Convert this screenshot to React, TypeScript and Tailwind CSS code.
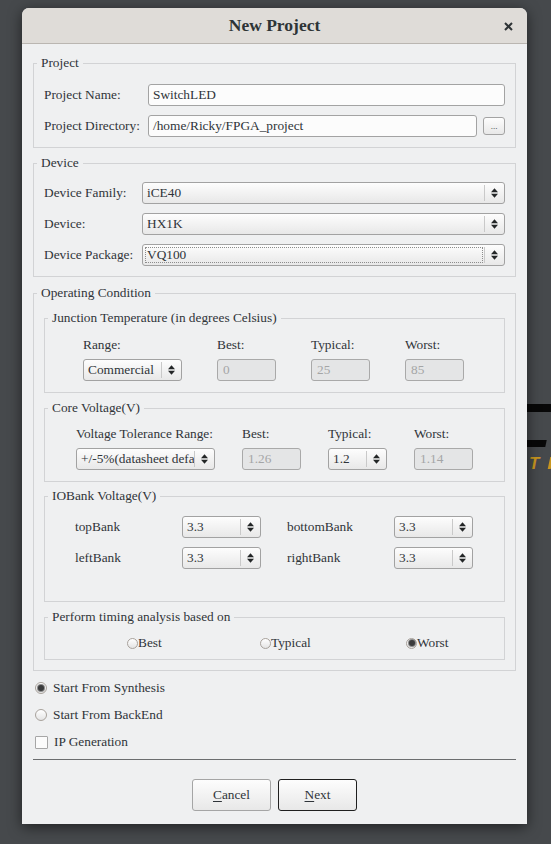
import React from 'react';

function Arrows() {
  return (
    <svg width="7" height="10" viewBox="0 0 7 10">
      <path d="M0 4.2L3.5 0.2L7 4.2Z M0 5.8L3.5 9.8L7 5.8Z" fill="#232627" />
    </svg>
  );
}

function Select({ value, className = '', focused = false }: { value: string; className?: string; focused?: boolean }) {
  return (
    <div
      className={`relative flex h-[22px] items-center rounded-[3px] border border-[#a2a2a2] bg-linear-to-b from-[#fdfdfd] to-[#e8e8e8] ${className}`}
    >
      <span className="flex-1 overflow-hidden whitespace-nowrap pl-[4px] leading-[16px]">{value}</span>
      <span className="flex h-[16px] w-[20px] shrink-0 items-center justify-center border-l border-[#c9c9c9]">
        <Arrows />
      </span>
      {focused && (
        <span className="absolute top-[2px] bottom-[2px] left-[2px] right-[21px] border border-dotted border-[#8c8c8c]" />
      )}
    </div>
  );
}

function Input({ value, className = '' }: { value: string; className?: string }) {
  return (
    <div className={`flex h-[22px] items-center rounded-[3px] border border-[#a3a3a3] bg-[#fcfcfc] pl-[4px] ${className}`}>
      {value}
    </div>
  );
}

function Disabled({ value }: { value: string }) {
  return (
    <div className="flex h-[22px] w-[59px] items-center rounded-[3px] border border-[#a9a9a9] bg-[#e4e5e6] pl-[5px] text-[#a4a5a6]">
      {value}
    </div>
  );
}

function Group({ title, className = '', children }: { title: string; className?: string; children: React.ReactNode }) {
  return (
    <fieldset className={`border border-[#d2d3d5] ${className}`}>
      <legend className="ml-[3px] px-[4px] leading-[16px]">{title}</legend>
      {children}
    </fieldset>
  );
}

function Radio({ checked = false, small = false }: { checked?: boolean; small?: boolean }) {
  return (
    <span
      className={`flex shrink-0 items-center justify-center rounded-full border border-[#a8a29c] bg-linear-to-b from-white to-[#e4e4e4] ${
        small ? 'h-[11px] w-[11px]' : 'h-[12px] w-[12px]'
      }`}
    >
      {checked && <span className="h-[6px] w-[6px] rounded-full bg-[#3a3b3c] ring-1 ring-[#8a8a8a]" />}
    </span>
  );
}

function Col({ label, children }: { label: string; children: React.ReactNode }) {
  return (
    <div className="flex flex-col gap-[6px]">
      <div className="leading-[16px]">{label}</div>
      {children}
    </div>
  );
}

export default function App() {
  return (
    <div className="relative h-[844px] w-[551px] overflow-hidden bg-[#46494c] font-['Liberation_Serif',serif] text-[13.33px] text-[#2f3439]">
      {/* wallpaper bits peeking out on the right */}
      <div className="absolute left-[515px] top-[404px] h-[8px] w-[50px] rounded-l-[4px] bg-[#080808]" />
      <div className="absolute left-[515px] top-[440px] h-[7px] w-[31px] -skew-x-12 bg-[#080808]" />
      <div className="absolute left-[529px] top-[451px] font-['Liberation_Sans',sans-serif] text-[17px] font-bold italic text-[#c8961f]">
        T
      </div>
      <div className="absolute left-[549px] top-[457px] h-[12px] w-[3px] -skew-x-12 bg-[#c8961f]" />

      <div className="relative pl-[22px] pt-[8px]">
        <div className="flex h-[816px] w-[505px] flex-col overflow-hidden rounded-t-[7px] bg-[#eff0f1] shadow-[0_3px_14px_rgba(0,0,0,0.55)]">
          <div className="relative flex h-[36px] shrink-0 items-center justify-center border-b border-[#bab6b1] bg-[#dfdcd8]">
            <span className="text-[17.5px] font-bold text-[#2e3436]">New Project</span>
            <svg className="absolute right-[14px] top-[14px]" width="9" height="9" viewBox="0 0 9 9">
              <path d="M1 1L8 8M8 1L1 8" stroke="#2e3436" strokeWidth="2" />
            </svg>
          </div>

          <div className="flex flex-col px-[11px] pt-[11px]">
            <Group title="Project">
              <div className="flex flex-col gap-[9px] px-[10px] pt-[13px] pb-[10px]">
                <div className="flex items-center">
                  <span className="w-[104px] shrink-0">Project Name:</span>
                  <Input value="SwitchLED" className="flex-1" />
                </div>
                <div className="flex items-center">
                  <span className="w-[104px] shrink-0">Project Directory:</span>
                  <Input value="/home/Ricky/FPGA_project" className="flex-1" />
                  <div className="ml-[6px] flex h-[18px] w-[22px] items-end justify-center rounded-[3px] border border-[#a3a3a3] bg-linear-to-b from-[#fdfdfd] to-[#e8e8e8] pb-[3px] text-[9px] leading-none">
                    ...
                  </div>
                </div>
              </div>
            </Group>

            <Group title="Device" className="mt-[7px]">
              <div className="flex flex-col gap-[9px] px-[10px] pt-[11px] pb-[10px]">
                <div className="flex items-center">
                  <span className="w-[98px] shrink-0">Device Family:</span>
                  <Select value="iCE40" className="flex-1" />
                </div>
                <div className="flex items-center">
                  <span className="w-[98px] shrink-0">Device:</span>
                  <Select value="HX1K" className="flex-1" />
                </div>
                <div className="flex items-center">
                  <span className="w-[98px] shrink-0">Device Package:</span>
                  <Select value="VQ100" className="flex-1" focused />
                </div>
              </div>
            </Group>

            <Group title="Operating Condition" className="mt-[8px]">
              <div className="flex flex-col px-[10px] pt-[9px] pb-[10px]">
                <Group title="Junction Temperature (in degrees Celsius)">
                  <div className="flex gap-[35px] pl-[38px] pt-[11px] pb-[11px]">
                    <Col label="Range:">
                      <Select value="Commercial" className="w-[99px]" />
                    </Col>
                    <Col label="Best:">
                      <Disabled value="0" />
                    </Col>
                    <Col label="Typical:">
                      <Disabled value="25" />
                    </Col>
                    <Col label="Worst:">
                      <Disabled value="85" />
                    </Col>
                  </div>
                </Group>

                <Group title="Core Voltage(V)" className="mt-[7px]">
                  <div className="flex gap-[27px] pl-[31px] pt-[10px] pb-[11px]">
                    <Col label="Voltage Tolerance Range:">
                      <Select value="+/-5%(datasheet default)" className="w-[139px]" />
                    </Col>
                    <Col label="Best:">
                      <Disabled value="1.26" />
                    </Col>
                    <Col label="Typical:">
                      <Select value="1.2" className="w-[59px]" />
                    </Col>
                    <Col label="Worst:">
                      <Disabled value="1.14" />
                    </Col>
                  </div>
                </Group>

                <Group title="IOBank Voltage(V)" className="mt-[6px]">
                  <div className="flex flex-col gap-[9px] pl-[30px] pt-[12px] pb-[32px]">
                    <div className="flex items-center">
                      <span className="w-[107px] shrink-0">topBank</span>
                      <Select value="3.3" className="w-[79px]" />
                      <span className="ml-[26px] w-[107px] shrink-0">bottomBank</span>
                      <Select value="3.3" className="w-[79px]" />
                    </div>
                    <div className="flex items-center">
                      <span className="w-[107px] shrink-0">leftBank</span>
                      <Select value="3.3" className="w-[79px]" />
                      <span className="ml-[26px] w-[107px] shrink-0">rightBank</span>
                      <Select value="3.3" className="w-[79px]" />
                    </div>
                  </div>
                </Group>

                <Group title="Perform timing analysis based on" className="mt-[7px]">
                  <div className="flex items-center pl-[82px] pt-[10px] pb-[8px] leading-[16px]">
                    <div className="flex w-[133px] items-center">
                      <Radio small />
                      <span>Best</span>
                    </div>
                    <div className="flex w-[146px] items-center">
                      <Radio small />
                      <span>Typical</span>
                    </div>
                    <div className="flex items-center">
                      <Radio small checked />
                      <span>Worst</span>
                    </div>
                  </div>
                </Group>
              </div>
            </Group>

            <div className="mt-[9px] flex flex-col gap-[11px] pl-[2px]">
              <div className="flex h-[16px] items-center gap-[6px]">
                <Radio checked />
                <span>Start From Synthesis</span>
              </div>
              <div className="flex h-[16px] items-center gap-[6px]">
                <Radio />
                <span>Start From BackEnd</span>
              </div>
              <div className="flex h-[16px] items-center gap-[6px]">
                <span className="h-[13px] w-[13px] shrink-0 rounded-[1px] border border-[#a6a6a6] bg-[#fbfbfb]" />
                <span>IP Generation</span>
              </div>
            </div>

            <div className="mt-[9px] h-px bg-[#6b6d6f]" />

            <div className="mt-[19px] flex justify-center gap-[7px]">
              <button className="flex h-[32px] w-[79px] items-center justify-center rounded-[3px] border border-[#a5a5a5] bg-linear-to-b from-[#fdfdfd] to-[#e8e8e8]">
                <span>
                  <span className="underline decoration-1 underline-offset-[2px]">C</span>ancel
                </span>
              </button>
              <button className="flex h-[32px] w-[79px] items-center justify-center rounded-[3px] border border-[#1f1f1f] bg-linear-to-b from-[#fdfdfd] to-[#e8e8e8]">
                <span>
                  <span className="underline decoration-1 underline-offset-[2px]">N</span>ext
                </span>
              </button>
            </div>
          </div>
        </div>
      </div>
    </div>
  );
}
